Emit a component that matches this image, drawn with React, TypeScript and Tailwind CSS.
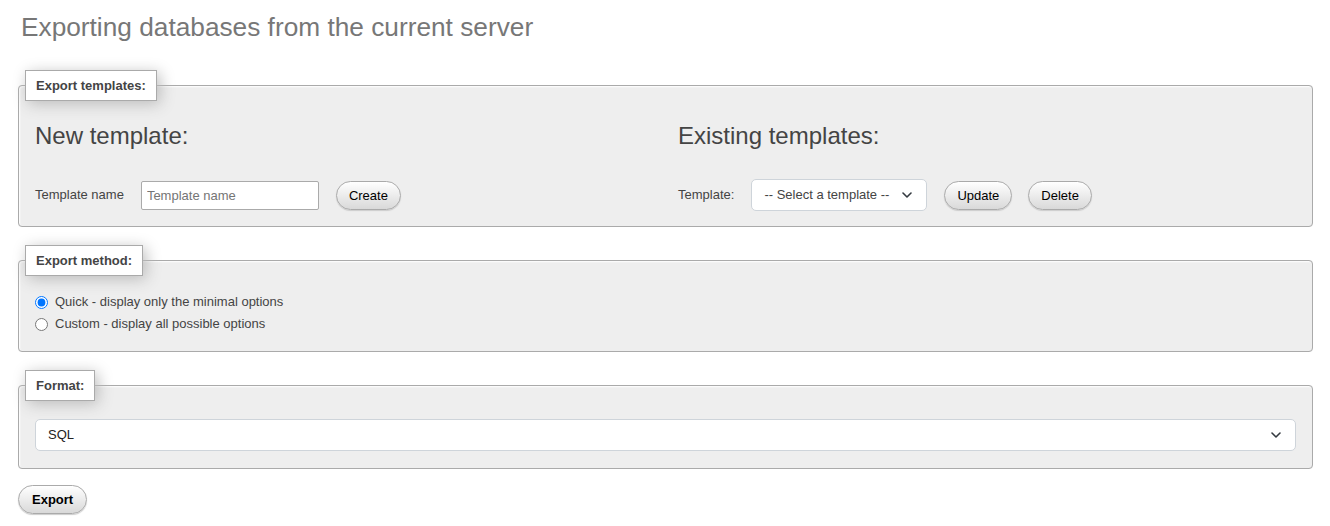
import React from "react";

const font = "font-['Liberation_Sans',Arial,sans-serif]";

function Chevron() {
  return (
    <svg width="10" height="6" viewBox="0 0 10 6" fill="none" className="shrink-0">
      <path d="M1 1l4 4 4-4" stroke="#343a40" strokeWidth="1.6" strokeLinecap="round" strokeLinejoin="round" />
    </svg>
  );
}

function Button({ children, bold = false }: { children: React.ReactNode; bold?: boolean }) {
  return (
    <button
      className={`h-[29px] rounded-full border border-[#aaa] bg-gradient-to-b from-white to-[#d9d9d9] text-[13px] leading-[15px] text-black shadow-[0_1px_1px_#ccc] ${
        bold ? "px-[13px] font-bold" : "px-[12px]"
      }`}
    >
      {children}
    </button>
  );
}

function Fieldset({ legend, children, className = "" }: { legend: string; children: React.ReactNode; className?: string }) {
  return (
    <fieldset className={`rounded-[4px] border border-[#aaa] bg-[#eee] px-[6px] shadow-[inset_1px_1px_2px_#fff] ${className}`}>
      <legend className="border border-[#aaa] bg-white px-[10px] py-[7px] text-[13px] font-bold leading-[15px] text-[#444] shadow-[3px_3px_15px_#bbb]">
        {legend}
      </legend>
      {children}
    </fieldset>
  );
}

export default function App() {
  return (
    <div className={`min-h-screen bg-white px-[18px] pr-[17px] ${font} text-[#444]`}>
      <h2 className="pl-[3px] pt-[12px] text-[26.25px] font-normal leading-[30px] text-[#777]">
        Exporting databases from the current server
      </h2>

      <Fieldset legend="Export templates:" className="mt-[28px] pb-[15px]">
        <div className="grid grid-cols-2 gap-x-[25px] px-[10px]">
          <div>
            <h3 className="mt-[21px] text-[24px] font-normal leading-[28px] text-[#444]">New template:</h3>
            <div className="mt-[29px] flex h-[32px] items-center gap-[17px] text-[13px]">
              <label>Template name</label>
              <input
                placeholder="Template name"
                className="h-[29px] w-[178px] rounded-[2px] border border-[#aaa] bg-white pl-[5px] text-[13px] text-[#555] placeholder:text-[#757575] outline-none"
              />
              <Button>Create</Button>
            </div>
          </div>
          <div>
            <h3 className="mt-[21px] text-[24px] font-normal leading-[28px] text-[#444]">Existing templates:</h3>
            <div className="mt-[29px] flex h-[32px] items-center text-[13px]">
              <label className="mr-[17px]">Template:</label>
              <div className="relative mr-[17px]">
                <select className="h-[32px] w-[176px] appearance-none rounded-[5px] border border-[#ced4da] bg-white pl-[12px] text-[13px] text-[#444] outline-none">
                  <option>-- Select a template --</option>
                </select>
                <div className="pointer-events-none absolute right-[15px] top-[13px]">
                  <Chevron />
                </div>
              </div>
              <div className="mr-[16px]">
                <Button>Update</Button>
              </div>
              <Button>Delete</Button>
            </div>
          </div>
        </div>
      </Fieldset>

      <Fieldset legend="Export method:" className="mt-[18px] pb-[16px]">
        <div className="mt-[15px] px-[10px] text-[13px]">
          <label className="flex h-[22px] items-center gap-[7px]">
            <input type="radio" name="method" defaultChecked className="m-0 h-[13px] w-[13px]" />
            Quick - display only the minimal options
          </label>
          <label className="flex h-[22px] items-center gap-[7px]">
            <input type="radio" name="method" className="m-0 h-[13px] w-[13px]" />
            Custom - display all possible options
          </label>
        </div>
      </Fieldset>

      <Fieldset legend="Format:" className="mt-[18px] pb-[17px]">
        <div className="mt-[18px] px-[10px]">
          <div className="relative">
            <select className="h-[32px] w-full appearance-none rounded-[5px] border border-[#ced4da] bg-white pl-[12px] text-[13px] text-[#222] outline-none">
              <option>SQL</option>
            </select>
            <div className="pointer-events-none absolute right-[15px] top-[13px]">
              <Chevron />
            </div>
          </div>
        </div>
      </Fieldset>

      <div className="mt-[16px]">
        <Button bold>Export</Button>
      </div>
    </div>
  );
}
